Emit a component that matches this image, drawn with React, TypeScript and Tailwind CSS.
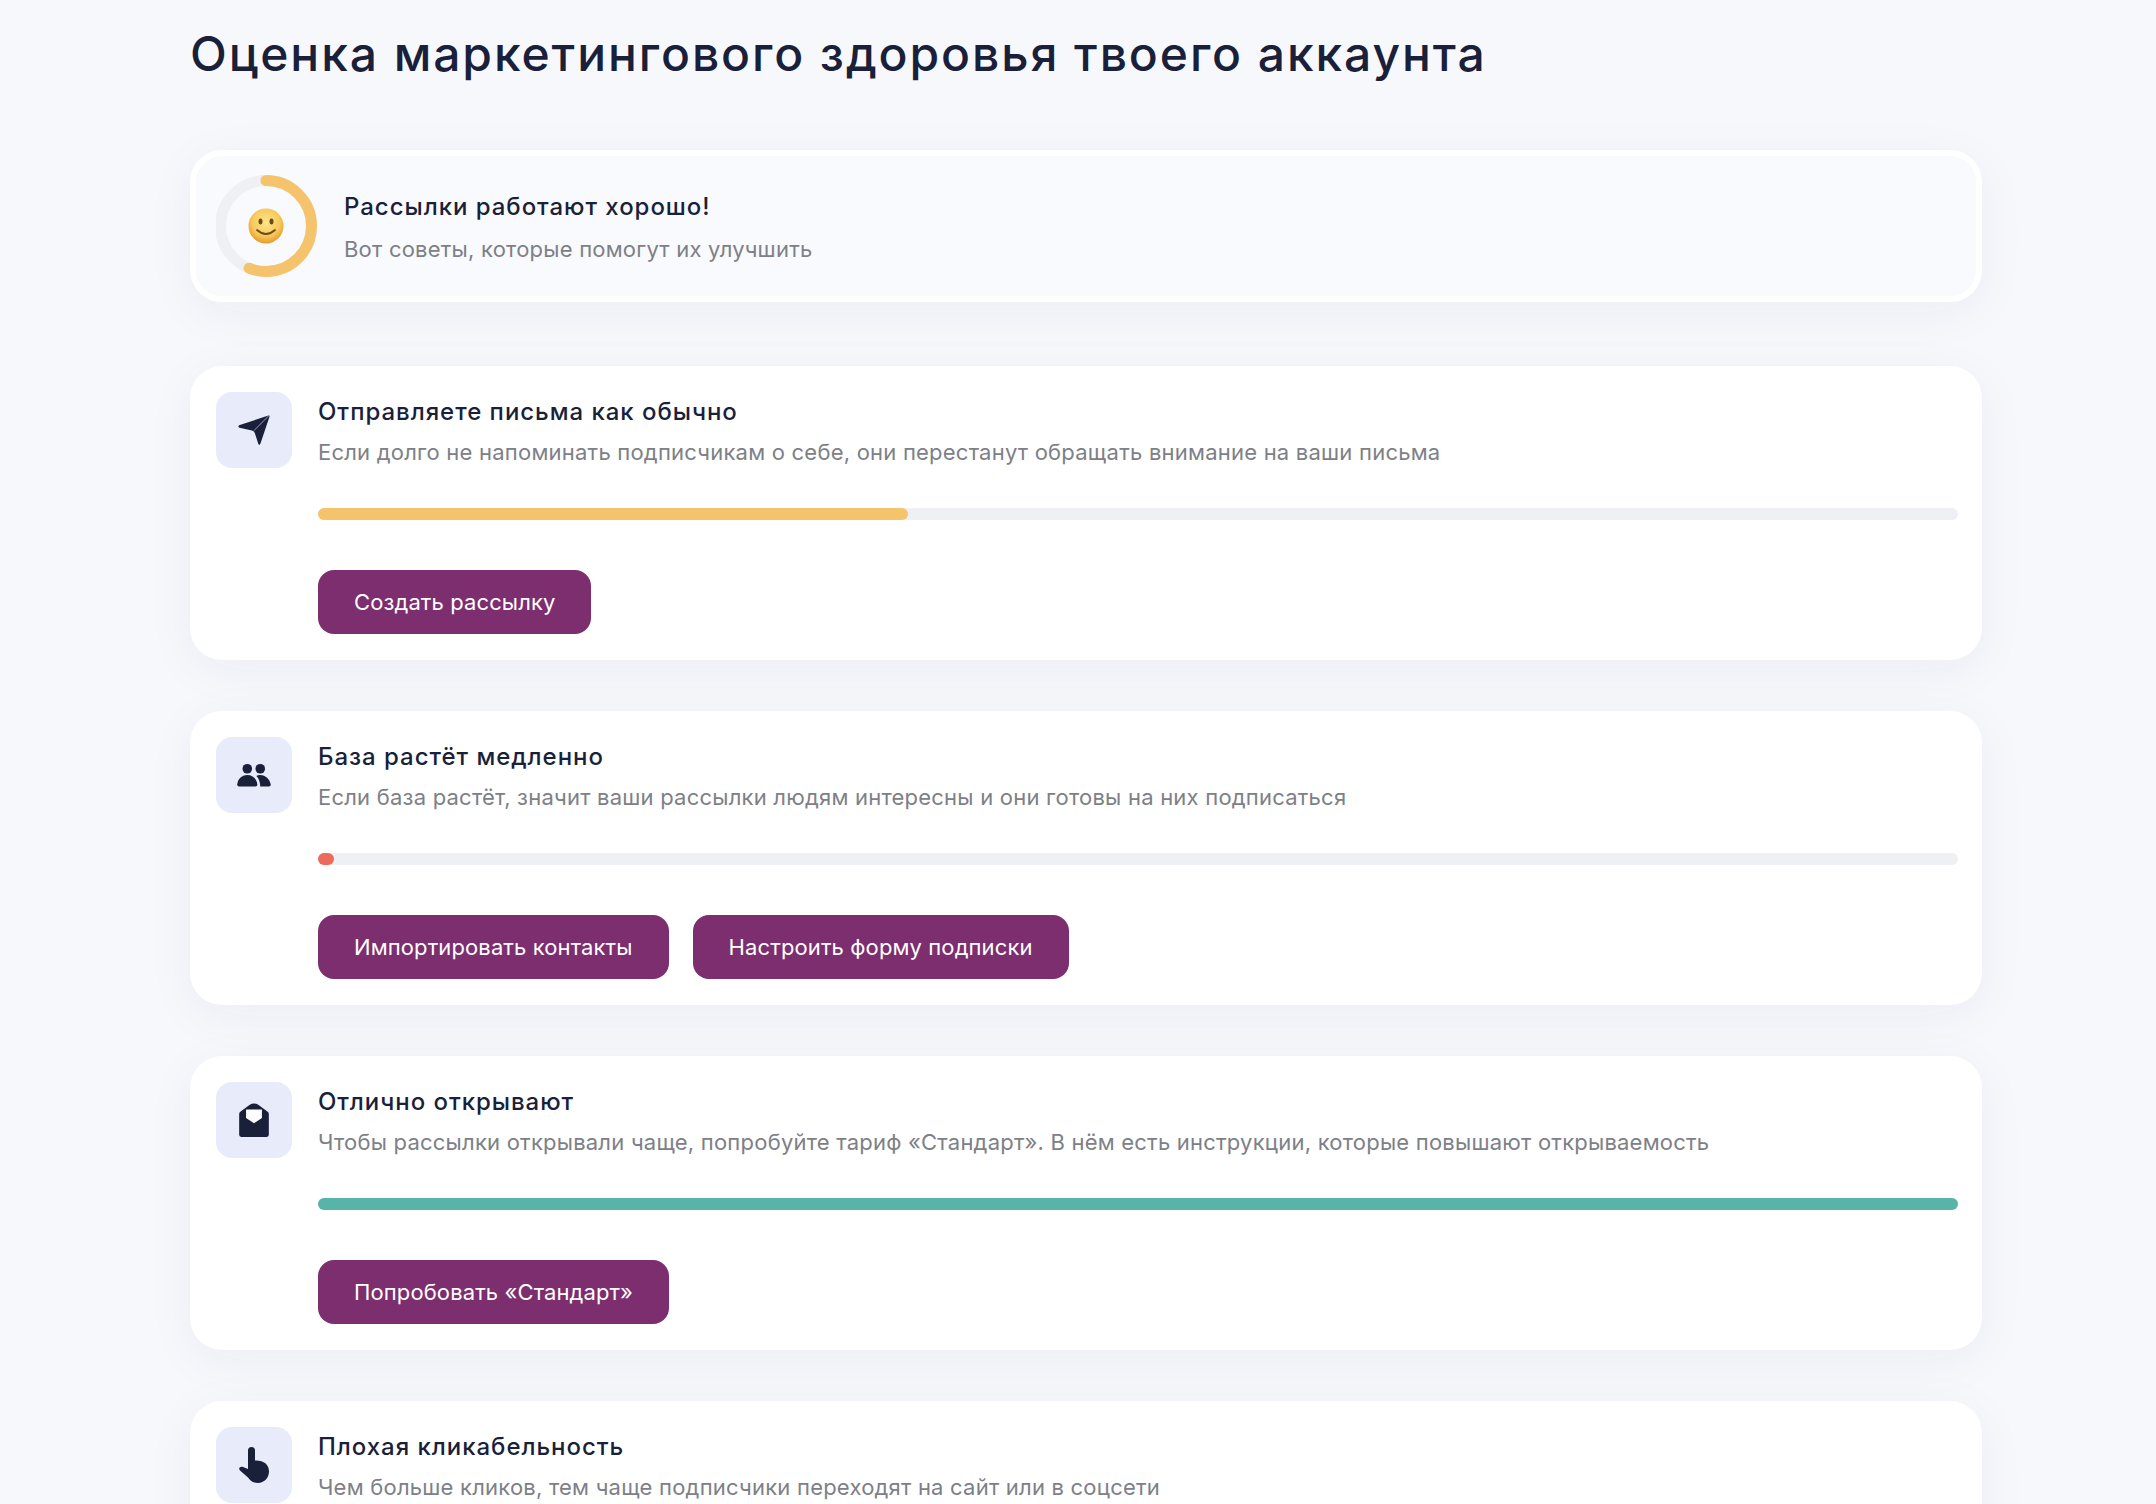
const font = { fontFamily: "Inter, sans-serif" };

type Tone = "yellow" | "red" | "teal";

const fills: Record<Tone, string> = {
  yellow: "bg-[#f5c36c]",
  red: "bg-[#ed6b5b]",
  teal: "bg-[#58b3a8]",
};

const titleCls = "text-2xl leading-8 font-medium tracking-[0.04em] text-[#1a1f3a]";
const bodyCls = "text-[22px] leading-8 tracking-[0.01em] text-[#7d8087]";
const shadowCls = "shadow-[0_10px_50px_rgba(30,35,70,0.05)]";

function SendIcon() {
  return (
    <svg viewBox="0 0 30 30" className="h-8 w-8" fill="#1a1f3a">
      <path d="M1 10.500 28.500 1.500Q30 1 29.500 2.500L21 28Q20 30 19 28L16 18.500Q15.500 16 13 15.500L1.500 13Q-0.500 12 1 10.500Z" />
      <path d="M29 1.500 15 15.500" stroke="#e8ebf9" strokeWidth="0.6" />
    </svg>
  );
}

function PeopleIcon() {
  return (
    <svg viewBox="0 0 36 25" className="h-6 w-9" fill="#1a1f3a">
      <circle cx="11" cy="6" r="5" />
      <circle cx="24.500" cy="6" r="5" />
      <path d="M0.500 22.500C1 17 5 12.500 11 12.500S21 17 21.500 22.500Q21.500 24.500 19.500 24.500H2.500Q0.500 24.500 0.500 22.500Z" />
      <path d="M24.500 24.500C24.500 20 23 16 20.500 13.500C21.500 13 23 12.500 24.500 12.500C30 12.500 34.500 17 35.500 22.500Q35.500 24.500 33.500 24.500Z" />
    </svg>
  );
}

function MailIcon() {
  return (
    <svg viewBox="0 0 34 34" className="h-9 w-9" fill="#1a1f3a">
      <path d="M3 11Q3 9.500 5 8.500L13 2.500Q17 0.500 21 2.500L29 8.500Q31 9.500 31 11V31Q31 33 29 33H5Q3 33 3 31Z" />
      <path d="M9.500 7H24.500V15L17 20 9.500 15Z" fill="#fff" />
    </svg>
  );
}

function HandIcon() {
  return (
    <svg viewBox="0 0 30 36" className="h-9 w-8" fill="#1a1f3a">
      <path d="M9 3.500a3.500 3.500 0 0 1 7 0V13.500C24 13 30 17 30 24.500 30 31 25 36 19 36 14 36 11 33.500 9 30.500L1 23.500C-1 21.500 1 19 4 20L9 22Z" />
    </svg>
  );
}

function Smile() {
  return (
    <svg viewBox="0 0 36 36" className="h-9 w-9">
      <defs>
        <radialGradient id="face" cx="50%" cy="40%" r="60%">
          <stop offset="0%" stopColor="#fde68a" />
          <stop offset="65%" stopColor="#f8c95c" />
          <stop offset="100%" stopColor="#e69a2a" />
        </radialGradient>
      </defs>
      <circle cx="18" cy="18" r="17.500" fill="url(#face)" />
      <ellipse cx="12.500" cy="13.500" rx="2" ry="3" fill="#6b4a1c" />
      <ellipse cx="23.500" cy="13.500" rx="2" ry="3" fill="#6b4a1c" />
      <path d="M9 22Q18 30 27 22" fill="none" stroke="#6b4a1c" strokeWidth="1.800" strokeLinecap="round" />
    </svg>
  );
}

function Gauge() {
  const r = 45.5;
  const len = 2 * Math.PI * r;
  return (
    <div className="relative flex h-26 w-26 shrink-0 items-center justify-center pr-1">
      <svg viewBox="0 0 104 104" className="absolute inset-0 h-full w-full">
        <g transform="rotate(-90 50 52)">
          <circle cx="50" cy="52" r={r} fill="none" stroke="#eff0f3" strokeWidth="11" />
          <circle
            cx="50"
            cy="52"
            r={r}
            fill="none"
            stroke="#f5c36c"
            strokeWidth="11"
            strokeLinecap="round"
            strokeDasharray={`${len * 0.56} ${len}`}
          />
        </g>
      </svg>
      <Smile />
    </div>
  );
}

const cards = [
  {
    icon: <SendIcon />,
    title: "Отправляете письма как обычно",
    text: "Если долго не напоминать подписчикам о себе, они перестанут обращать внимание на ваши письма",
    pct: 36,
    tone: "yellow" as Tone,
    buttons: ["Создать рассылку"],
  },
  {
    icon: <PeopleIcon />,
    title: "База растёт медленно",
    text: "Если база растёт, значит ваши рассылки людям интересны и они готовы на них подписаться",
    pct: 1,
    tone: "red" as Tone,
    buttons: ["Импортировать контакты", "Настроить форму подписки"],
  },
  {
    icon: <MailIcon />,
    title: "Отлично открывают",
    text: "Чтобы рассылки открывали чаще, попробуйте тариф «Стандарт». В нём есть инструкции, которые повышают открываемость",
    pct: 100,
    tone: "teal" as Tone,
    buttons: ["Попробовать «Стандарт»"],
  },
  {
    icon: <HandIcon />,
    title: "Плохая кликабельность",
    text: "Чем больше кликов, тем чаще подписчики переходят на сайт или в соцсети",
    pct: 1,
    tone: "red" as Tone,
    buttons: [],
  },
];

export default function App() {
  return (
    <div style={font} className="h-screen overflow-hidden bg-[#f7f8fc] pl-[190px] pr-[174px] pt-6">
      <h1 className="mb-16 pb-0.5 text-5xl leading-tight font-medium tracking-[0.04em] text-[#1a1f3a]">
        Оценка маркетингового здоровья твоего аккаунта
      </h1>

      <div className={`mb-16 flex h-38 items-center gap-6 rounded-4xl border-6 border-white bg-[#f9fafe] pl-5 ${shadowCls}`}>
        <Gauge />
        <div className="pt-1">
          <div className={titleCls}>Рассылки работают хорошо!</div>
          <div className={`mt-2.5 ${bodyCls}`}>Вот советы, которые помогут их улучшить</div>
        </div>
      </div>

      <div className="flex flex-col gap-[51px]">
        {cards.map((c) => (
          <section key={c.title} className={`flex gap-6 rounded-4xl bg-white px-6 pt-6 pb-6.5 ${shadowCls}`}>
            <div className="mx-0.5 mt-0.5 flex h-19 w-19 shrink-0 items-center justify-center rounded-2xl bg-[#e8ebf9]">
              {c.icon}
            </div>
            <div className="min-w-0 flex-1">
              <h2 className={`mt-1.5 ${titleCls}`}>{c.title}</h2>
              <p className={`mt-2 ${bodyCls}`}>{c.text}</p>
              <div className="my-10 h-3 rounded-full bg-[#eff0f3]">
                <div
                  className={`h-full min-w-4 rounded-full ${fills[c.tone]}`}
                  style={{ width: `${c.pct}%` }}
                />
              </div>
              <div className="flex gap-6 pt-2.5">
                {c.buttons.map((b) => (
                  <button
                    key={b}
                    className="rounded-2xl bg-[#7c2e6f] px-9 py-4 text-[22px] leading-8 tracking-[0.005em] text-white"
                  >
                    {b}
                  </button>
                ))}
              </div>
            </div>
          </section>
        ))}
      </div>
    </div>
  );
}
